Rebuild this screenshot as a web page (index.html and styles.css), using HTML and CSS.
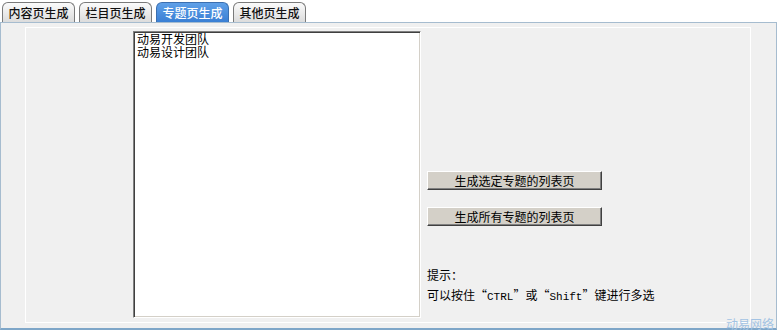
FILE: index.html
```html
<!DOCTYPE html>
<html lang="zh-CN">

<head>
  <meta charset="UTF-8">
  <title>专题页生成</title>
  <link rel="stylesheet" href="styles.css">
</head>

<body>
  <div class="tabs">
    <div class="tab">内容页生成</div>
    <div class="tab">栏目页生成</div>
    <div class="tab active">专题页生成</div>
    <div class="tab">其他页生成</div>
  </div>

  <div class="panel">
    <div class="inner">
      <div class="listBox">
        <div class="item">动易开发团队</div>
        <div class="item">动易设计团队</div>
      </div>
      <div class="side">
        <button class="btn">生成选定专题的列表页</button>
        <button class="btn">生成所有专题的列表页</button>
        <div class="tip">提示：</div>
        <div class="tip">可以按住“<span class="mono">CTRL</span>”或“<span class="mono">Shift</span>”键进行多选</div>
      </div>
    </div>
    <div class="brand">动易网络</div>
  </div>
</body>

</html>
```

FILE: styles.css
```css
body {
  margin: 0;
  width: 780px;
  height: 331px;
  background: #fff;
  font-family: "Noto Sans CJK SC", "DejaVu Sans", sans-serif;
  font-size: 12px;
  color: #000;
  overflow: hidden;
}

.tabs {
  display: flex;
  gap: 4px;
  padding: 2px 0 0 2px;
  height: 20px;
}

.tab {
  width: 71px;
  height: 19px;
  line-height: 19px;
  text-align: center;
  border: 1px solid #7a7a7a;
  border-bottom: none;
  border-radius: 6px 6px 0 0;
  background: linear-gradient(#fbfbfb, #dcdcdc);
  color: #111;
  font-weight: 500;
}

.tab.active {
  border-color: #3b6fb0;
  background: linear-gradient(#5fa0e8, #3a7fd4);
  color: #fff;
}

.panel {
  position: relative;
  height: 305px;
  margin: 0 3px 0 0;
  background: #f0f0f0;
  border: 1px solid #a6bccf;
  border-bottom: 2px solid #7ea6c8;
}

.inner {
  display: flex;
  margin: 4px 25px 2px 24px;
  height: 296px;
  border: 1px solid #fff;
  padding: 3px 0 0 107px;
  box-sizing: border-box;
}

/* keep list lines 13px apart without overlapping text boxes */
.listBox {
  width: 280px;
  height: 283px;
  background: #fff;
  border: 1px solid;
  border-color: #808080 #fff #fff #808080;
  box-shadow: inset 1px 1px #404040, inset -1px -1px #d4d0c8;
  padding: 2px 3px 0;
  font-family: "Liberation Sans", "Noto Sans CJK SC", sans-serif;
  line-height: 13px;
}

.side {
  display: flex;
  flex-direction: column;
  align-items: flex-start;
  padding: 140px 0 0 6px;
}

.btn {
  width: 175px;
  height: 19px;
  margin-bottom: 17px;
  padding: 0;
  font-family: inherit;
  font-size: 12px;
  line-height: 15px;
  color: #000;
  background: #d4d0c8;
  border: 1px solid;
  border-color: #fff #404040 #404040 #fff;
  box-shadow: inset -1px -1px #808080;
}

.tip {
  line-height: 20px;
}

.btn + .btn + .tip {
  margin-top: 22px;
}

.mono {
  font-family: "Liberation Mono", monospace;
  font-size: 11px;
}

.brand {
  position: absolute;
  right: 2px;
  bottom: -2px;
  color: #a3c3e3;
  line-height: 13px;
}
```
